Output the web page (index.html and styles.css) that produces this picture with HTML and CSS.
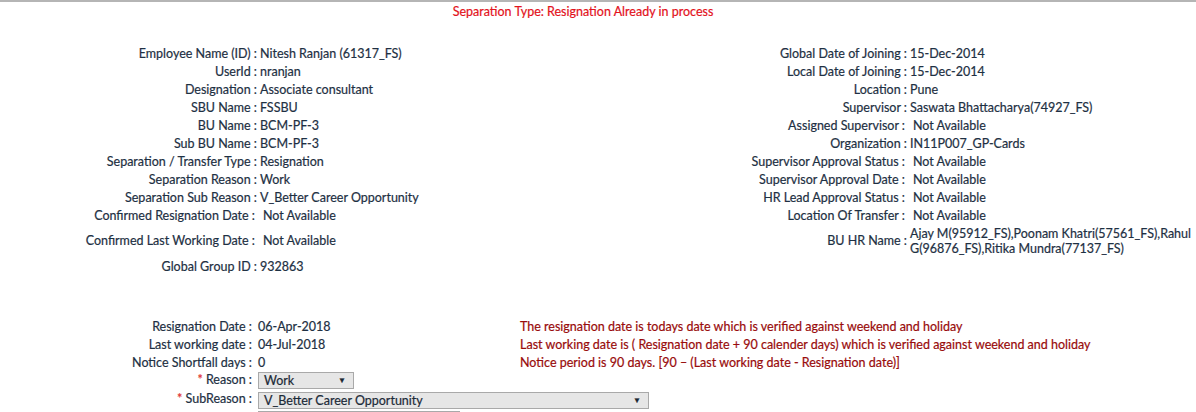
FILE: index.html
```html
<!DOCTYPE html>
<html>
<head>
<meta charset="utf-8">
<link rel="stylesheet" href="styles.css">
</head>
<body>
<div class="page">
  <div class="title">Separation Type: Resignation Already in process</div>

  <div class="info">
    <div class="lbl">Employee Name (ID) :</div><div class="val">Nitesh Ranjan (61317_FS)</div>
    <div class="lbl">Global Date of Joining :</div><div class="val">15-Dec-2014</div>

    <div class="lbl">UserId :</div><div class="val">nranjan</div>
    <div class="lbl">Local Date of Joining :</div><div class="val">15-Dec-2014</div>

    <div class="lbl">Designation :</div><div class="val">Associate consultant</div>
    <div class="lbl">Location :</div><div class="val">Pune</div>

    <div class="lbl">SBU Name :</div><div class="val">FSSBU</div>
    <div class="lbl">Supervisor :</div><div class="val">Saswata Bhattacharya(74927_FS)</div>

    <div class="lbl">BU Name :</div><div class="val">BCM-PF-3</div>
    <div class="lbl sp">Assigned Supervisor :</div><div class="val sp">Not Available</div>

    <div class="lbl">Sub BU Name :</div><div class="val">BCM-PF-3</div>
    <div class="lbl">Organization :</div><div class="val">IN11P007_GP-Cards</div>

    <div class="lbl">Separation / Transfer Type :</div><div class="val">Resignation</div>
    <div class="lbl sp">Supervisor Approval Status :</div><div class="val sp">Not Available</div>

    <div class="lbl">Separation Reason :</div><div class="val">Work</div>
    <div class="lbl sp">Supervisor Approval Date :</div><div class="val sp">Not Available</div>

    <div class="lbl">Separation Sub Reason :</div><div class="val">V_Better Career Opportunity</div>
    <div class="lbl sp">HR Lead Approval Status :</div><div class="val sp">Not Available</div>

    <div class="lbl sp">Confirmed Resignation Date :</div><div class="val sp">Not Available</div>
    <div class="lbl sp">Location Of Transfer :</div><div class="val sp">Not Available</div>

    <div class="lbl sp">Confirmed Last Working Date :</div><div class="val sp">Not Available</div>
    <div class="lbl">BU HR Name :</div><div class="val">Ajay M(95912_FS),Poonam Khatri(57561_FS),Rahul G(96876_FS),Ritika Mundra(77137_FS)</div>

    <div class="lbl">Global Group ID :</div><div class="val">932863</div>
    <div class="lbl"></div><div class="val"></div>
  </div>

  <div class="resign">
    <div class="lbl">Resignation Date :</div><div class="val">06-Apr-2018</div>
    <div class="note">The resignation date is todays date which is verified against weekend and holiday</div>

    <div class="lbl">Last working date :</div><div class="val">04-Jul-2018</div>
    <div class="note">Last working date is ( Resignation date + 90 calender days) which is verified against weekend and holiday</div>

    <div class="lbl">Notice Shortfall days :</div><div class="val">0</div>
    <div class="note">Notice period is 90 days. [90 – (Last working date - Resignation date)]</div>

    <div class="lbl sel-row"><span class="req">*</span> Reason :</div>
    <div class="val sel-cell wide-span">
      <span class="select small"><span class="sel-text">Work</span><span class="arrow">▼</span></span>
    </div>

    <div class="lbl sel-row"><span class="req">*</span> SubReason :</div>
    <div class="val sel-cell wide-span">
      <span class="select large"><span class="sel-text">V_Better Career Opportunity</span><span class="arrow">▼</span></span>
    </div>

    <div class="lbl sel-row"></div>
    <div class="val sel-cell wide-span"><span class="box"></span></div>
  </div>
</div>
</body>
</html>
```

FILE: styles.css
```css
html, body {
  margin: 0;
  padding: 0;
  background: #ffffff;
}

body {
  font-family: Lato, "Liberation Sans", sans-serif;
  font-size: 12.5px;
  color: #1e3043;
  -webkit-text-stroke: 0.2px currentColor;
}

.page {
  border-top: 2px solid #b5b5b5;
  width: 1196px;
  height: 410px;
  overflow: hidden;
}

.title {
  width: 1166px;
  text-align: center;
  color: #e3121c;
  line-height: 15px;
  padding-top: 2px;
}

.info {
  display: grid;
  grid-template-columns: 257px 343px 307px 286px;
  align-items: center;
  margin-top: 25px;
  line-height: 15px;
}

.info .lbl,
.info .val {
  padding: 1.5px 0;
  min-height: 15px;
}

.lbl {
  text-align: right;
  white-space: nowrap;
}

.info .val {
  padding-left: 3px;
}

.info .val.sp {
  padding-left: 6px;
}

.info .lbl.sp {
  padding-right: 2px;
}

.resign {
  display: grid;
  grid-template-columns: 252px 268px 1fr;
  align-items: center;
  margin-top: 42px;
  line-height: 15px;
}

.resign .lbl,
.resign .val,
.resign .note {
  padding: 1.5px 0;
  min-height: 15px;
}

.resign .val {
  padding-left: 6px;
}

.note {
  color: #990c0c;
  white-space: nowrap;
}

.wide-span {
  grid-column: 2 / 4;
}

.resign .sel-row,
.resign .sel-cell {
  padding-top: 1px;
  padding-bottom: 1px;
  min-height: 17px;
}

.req {
  color: #e03030;
}

.select {
  position: relative;
  display: inline-block;
  box-sizing: border-box;
  height: 17px;
  line-height: 15px;
  border: 1px solid #a9a9a9;
  background: #e6e6e6;
  color: #1c2a38;
  vertical-align: middle;
}

.select.small {
  width: 96px;
}

.select.large {
  width: 391px;
}

.sel-text {
  padding-left: 5px;
}

.arrow {
  position: absolute;
  right: 7px;
  top: 0;
  font-size: 8px;
  color: #1a2733;
}

.box {
  display: inline-block;
  box-sizing: border-box;
  width: 202px;
  height: 20px;
  border: 1px solid #a9a9a9;
  vertical-align: top;
}
```
